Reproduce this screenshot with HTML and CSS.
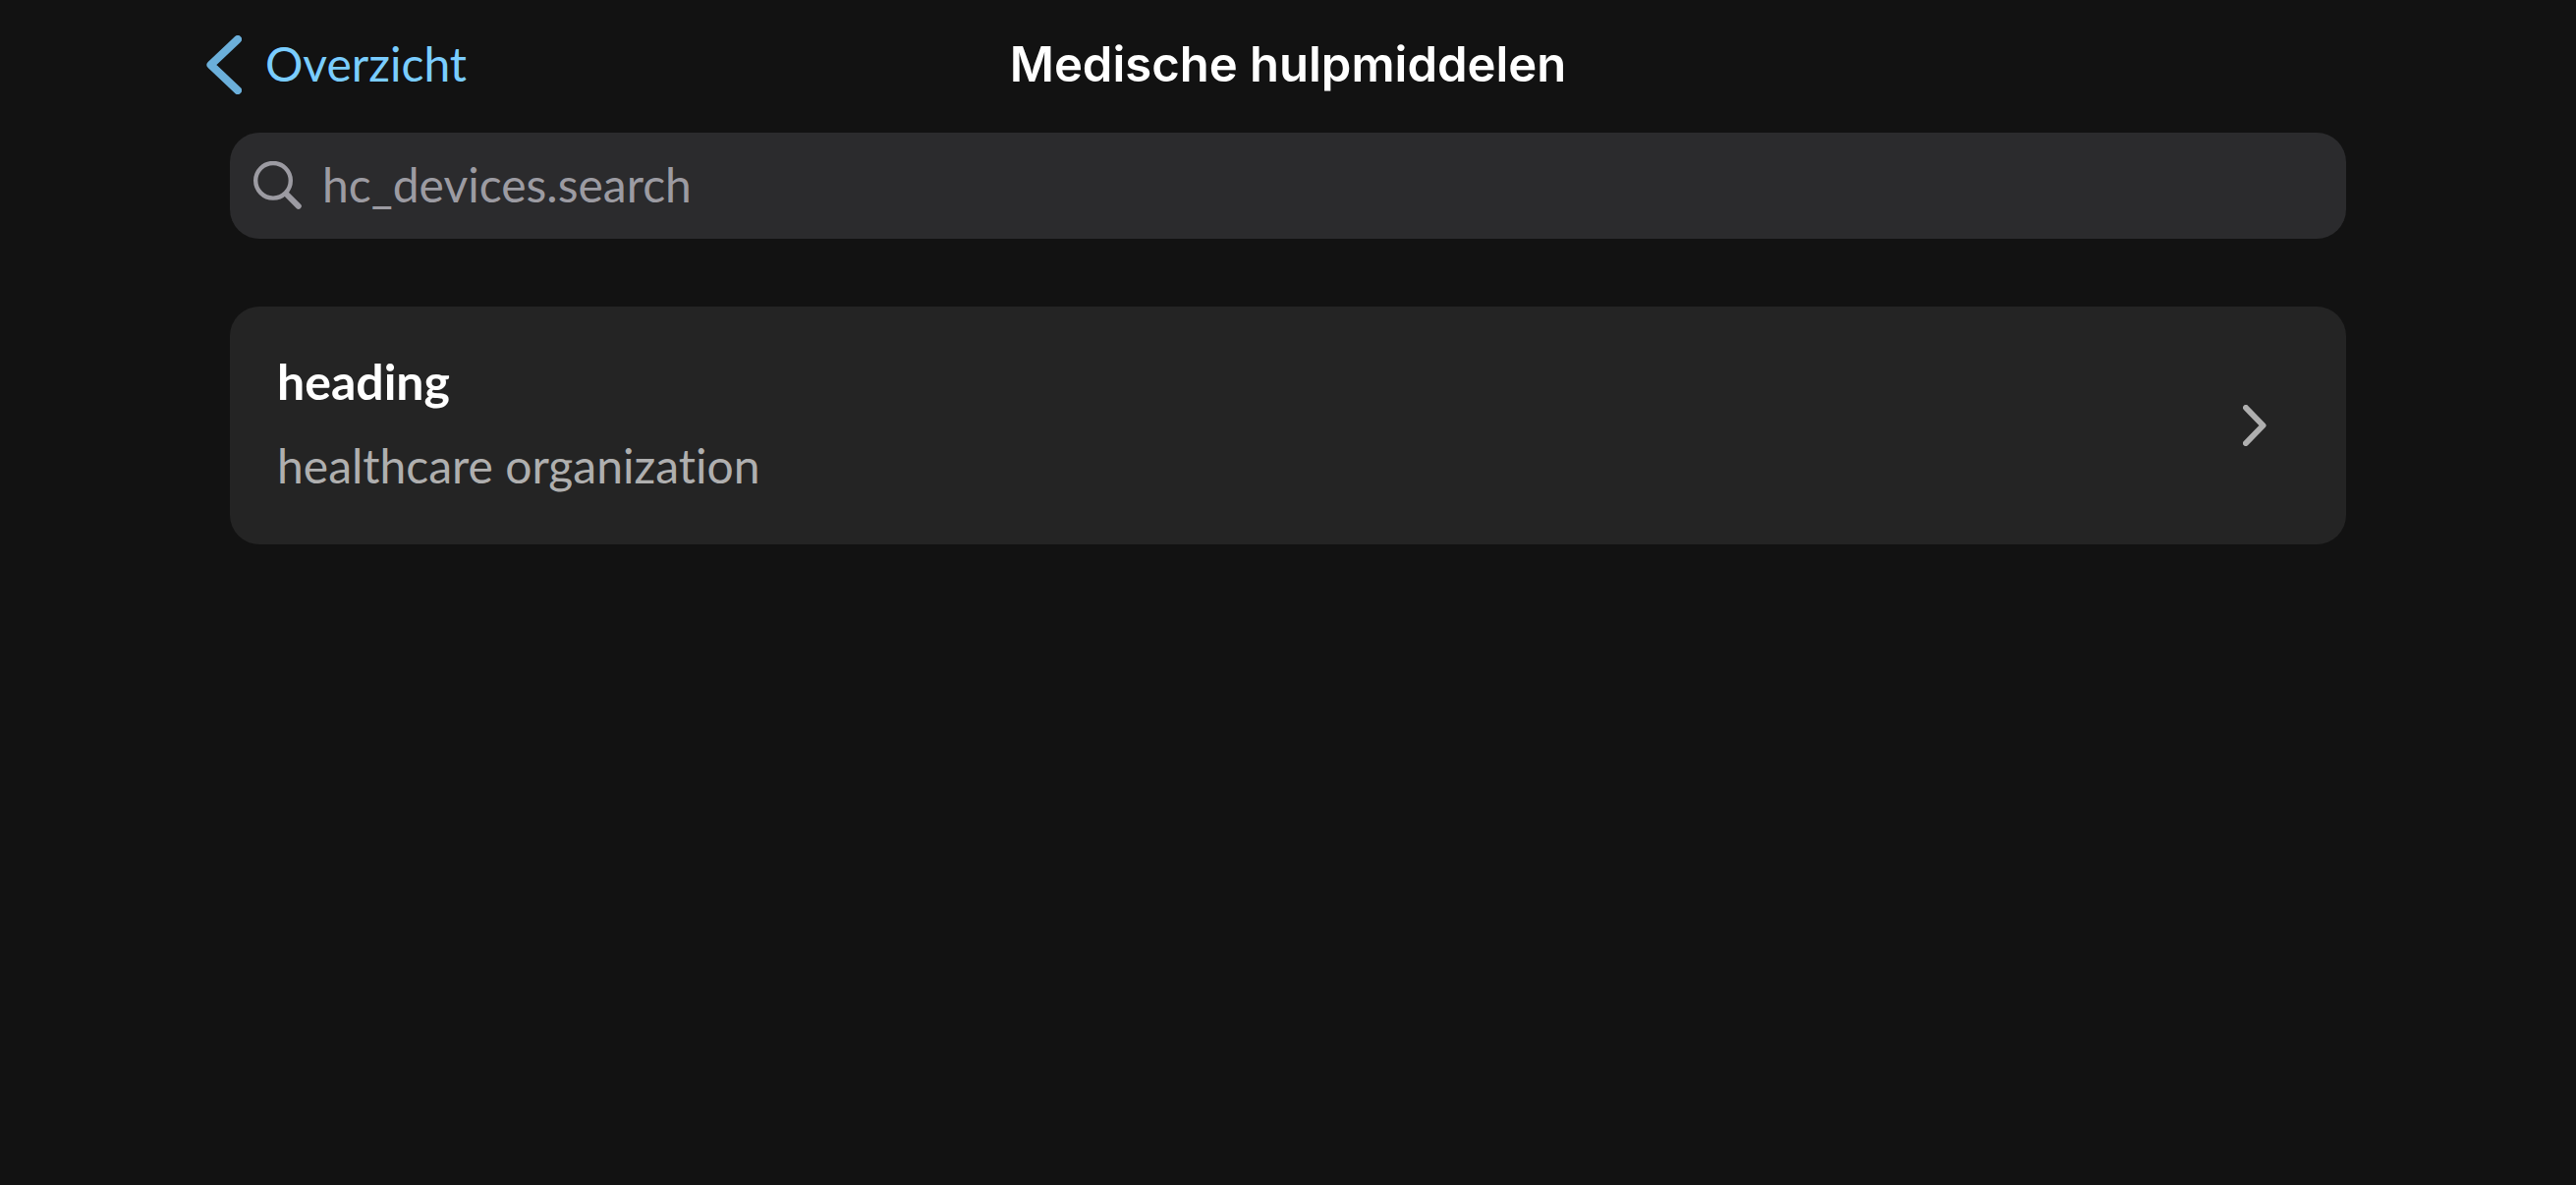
FILE: index.html
```html
<!DOCTYPE html>
<html lang="nl">
<head>
  <meta charset="utf-8">
  <meta name="viewport" content="width=device-width, initial-scale=1">
  <title>Medische hulpmiddelen</title>
  <link rel="stylesheet" href="styles.css">
</head>
<body>
  <header class="navbar">
    <a class="back" href="#overzicht">
      <svg class="back-icon" viewBox="0 0 36 60" aria-hidden="true"><path d="M32 4 4.500 30 32 56"/></svg>
      <span class="back-label">Overzicht</span>
    </a>
    <h1 class="title">Medische hulpmiddelen</h1>
  </header>
  <main class="content">
    <label class="search">
      <svg class="search-icon" viewBox="0 0 50 50" aria-hidden="true">
        <circle cx="20" cy="19.800" r="17.800"/>
        <path d="M33.500 33.500 45.800 45.800"/>
      </svg>
      <input class="search-input" type="search" placeholder="hc_devices.search" aria-label="hc_devices.search">
    </label>
    <a class="card" href="#heading">
      <div class="card-text">
        <h2 class="card-title">heading</h2>
        <p class="card-subtitle">healthcare organization</p>
      </div>
      <svg class="card-icon" viewBox="0 0 24 42" aria-hidden="true"><path d="M3 3 20.500 21 3 39"/></svg>
    </a>
  </main>
</body>
</html>
```
FILE: styles.css
```css
* {
  box-sizing: border-box;
}

body {
  margin: 0;
  min-height: 100vh;
  background: #121212;
  color: #fff;
  font-family: Lato, "Open Sans", sans-serif;
  font-size: 48px;
  line-height: 60px;
  font-variant-ligatures: none;
}

svg {
  display: block;
  flex: none;
  fill: none;
  stroke-linecap: round;
  stroke-linejoin: round;
}

.navbar {
  display: grid;
  grid-template-columns: 1fr auto 1fr;
  align-items: center;
  padding: 36px 210px;
}

.back {
  display: flex;
  align-items: center;
  justify-self: start;
  gap: 24px;
  height: 60px;
  color: #7acdff;
  text-decoration: none;
}

.back-label {
  padding-bottom: 2px;
}

.back-icon {
  width: 36px;
  height: 60px;
  stroke: #6bafda;
  stroke-width: 8;
}

.title {
  margin: 0;
  font-family: Inter, "Liberation Sans", sans-serif;
  font-size: 49px;
  font-weight: 600;
}

.content {
  display: flex;
  flex-direction: column;
  gap: 69px;
  padding: 3px 234px 48px;
}

.search {
  display: flex;
  align-items: center;
  gap: 20px;
  height: 108px;
  padding: 0 24px;
  border-radius: 30px;
  background: #2b2b2d;
}

.search-icon {
  width: 50px;
  height: 50px;
  stroke: #9c9ba2;
  stroke-width: 4.4;
}

.search-icon path {
  stroke-width: 6;
}

.search-input {
  flex: 1;
  min-width: 0;
  height: 64px;
  padding: 0 0 4px;
  border: 0;
  outline: 0;
  background: none;
  color: #fff;
  font: inherit;
  appearance: none;
}

.search-input::placeholder {
  color: #9c9ba2;
  opacity: 1;
}

.card {
  display: flex;
  align-items: center;
  justify-content: space-between;
  padding: 46px 81px 50px 48px;
  border-radius: 30px;
  background: #242424;
  color: #fff;
  text-decoration: none;
}

.card-text {
  display: flex;
  flex-direction: column;
  gap: 26px;
}

.card-title,
.card-subtitle {
  margin: 0;
}

.card-title {
  font-size: 50px;
  font-weight: 700;
}

.card-subtitle {
  color: #afafaf;
}

.card-icon {
  width: 24px;
  height: 46px;
  padding-top: 4px;
  box-sizing: border-box;
  stroke: #afafaf;
  stroke-width: 6;
}
```
